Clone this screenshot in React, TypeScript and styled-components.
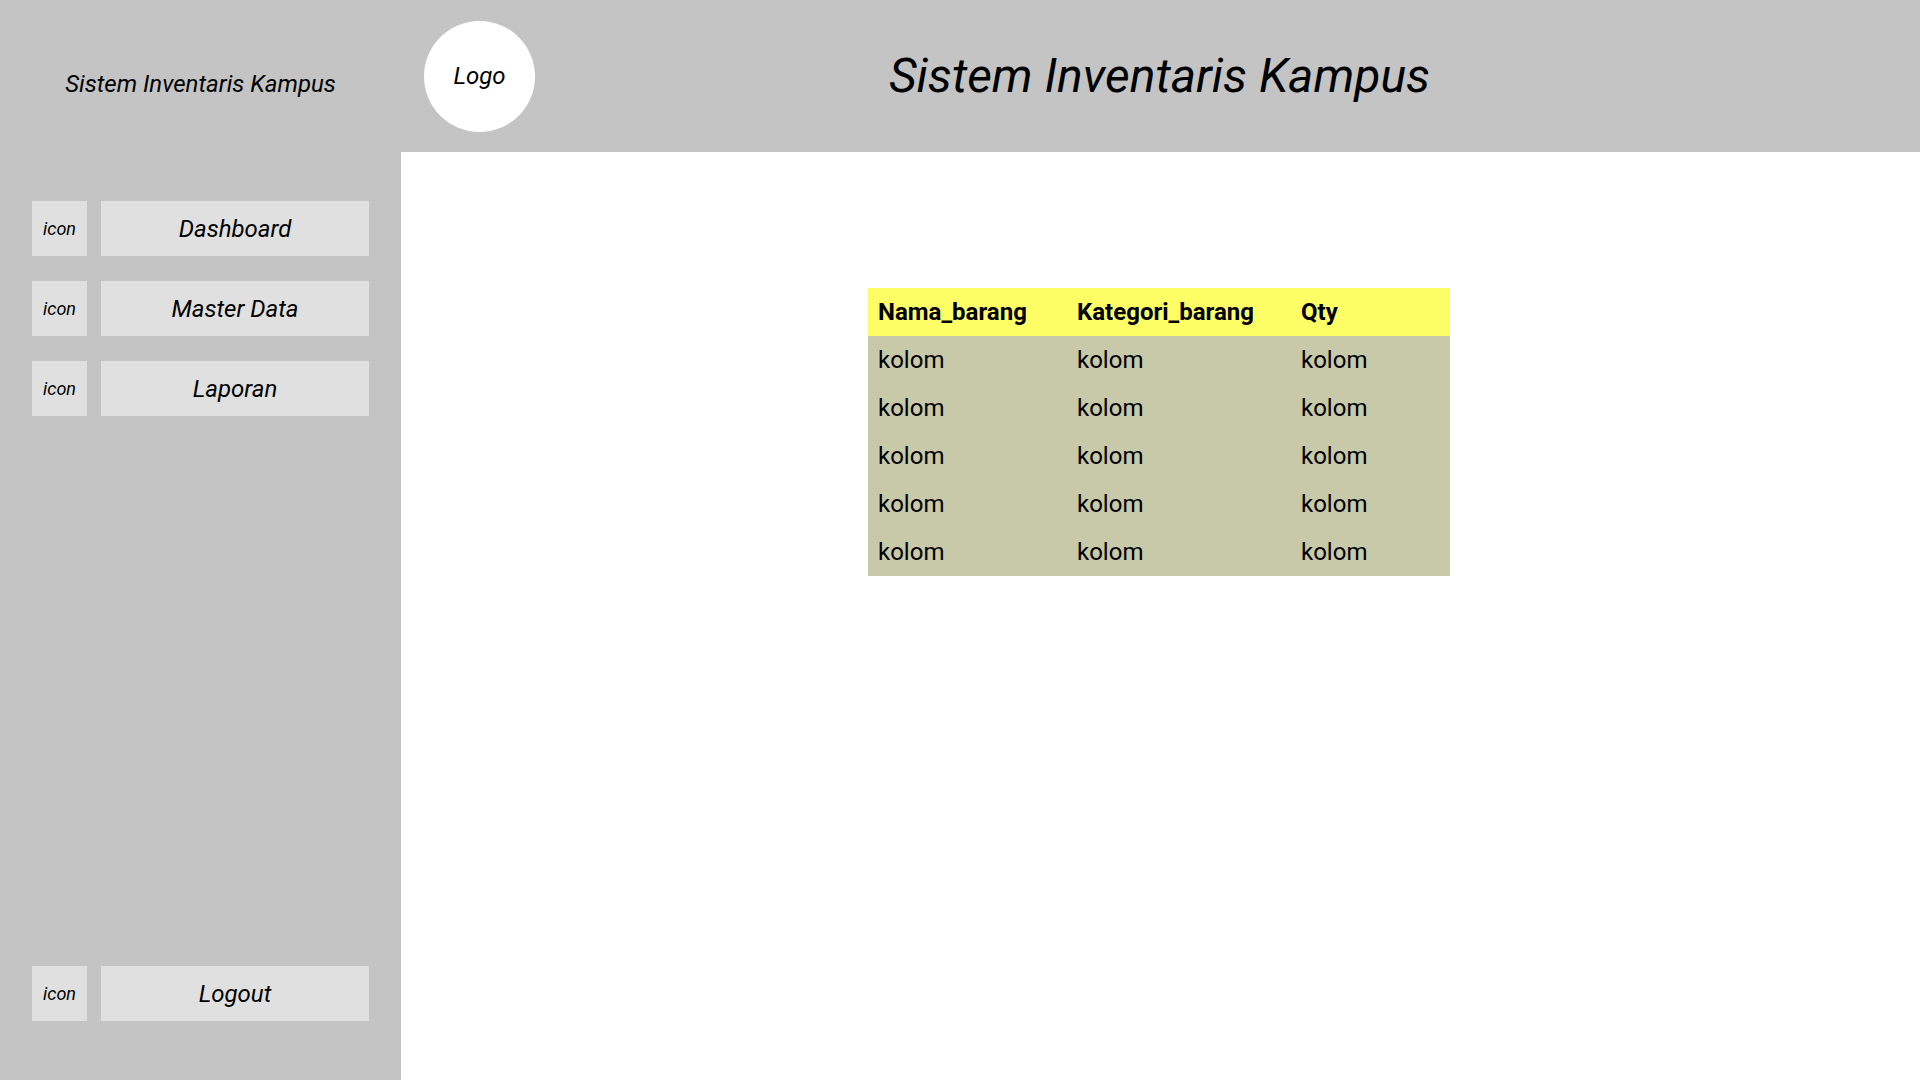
import React from "react";
import styled, { createGlobalStyle } from "styled-components";

const GlobalStyle = createGlobalStyle`
  html, body {
    margin: 0;
    padding: 0;
    height: 100%;
  }
  body {
    font-family: Roboto, "Liberation Sans", sans-serif;
    color: #000;
  }
  #root {
    height: 100vh;
  }
  * {
    box-sizing: border-box;
  }
`;

const Layout = styled.div`
  display: grid;
  grid-template-columns: 401px 1fr;
  height: 100vh;
  width: 100vw;
  overflow: hidden;
`;

const Sidebar = styled.aside`
  background: #c4c4c4;
  display: flex;
  flex-direction: column;
  padding: 70px 32px 59px 32px;
`;

const SideTitle = styled.div`
  font-style: italic;
  font-size: 24px;
  line-height: 28px;
  text-align: center;
  margin-bottom: 103px;
`;

const NavList = styled.nav`
  display: flex;
  flex-direction: column;
  gap: 25px;
`;

const NavRow = styled.div<{ $bottom?: boolean }>`
  display: flex;
  gap: 14px;
  height: 55px;
  margin-top: ${(p) => (p.$bottom ? "auto" : "0")};
`;

const IconBox = styled.div`
  width: 55px;
  height: 55px;
  background: #e0e0e0;
  display: flex;
  align-items: center;
  justify-content: center;
  font-style: italic;
  font-size: 18px;
`;

const NavButton = styled.div`
  flex: 1;
  height: 55px;
  background: #e0e0e0;
  display: flex;
  align-items: center;
  justify-content: center;
  font-style: italic;
  font-size: 24px;
`;

const Main = styled.main`
  display: flex;
  flex-direction: column;
  background: #ffffff;
`;

const Header = styled.header`
  height: 152px;
  background: #c4c4c4;
  display: grid;
  grid-template-columns: 1fr auto 1fr;
  align-items: center;
`;

const Logo = styled.div`
  justify-self: start;
  margin-left: 23px;
  width: 111px;
  height: 111px;
  border-radius: 50%;
  background: #ffffff;
  display: flex;
  align-items: center;
  justify-content: center;
  font-style: italic;
  font-size: 24px;
`;

const Title = styled.h1`
  margin: 0 2px 0 0;
  font-weight: 400;
  font-style: italic;
  font-size: 48px;
  line-height: 56px;
`;

const Content = styled.section`
  flex: 1;
  display: flex;
  justify-content: center;
  align-items: flex-start;
  padding: 136px 3px 0 0;
`;

const Table = styled.table`
  border-collapse: collapse;
  width: 582px;
  table-layout: fixed;
  font-size: 24px;
`;

const HeadCell = styled.th<{ $w: number }>`
  width: ${(p) => p.$w}px;
  height: 48px;
  padding: 0 10px;
  text-align: left;
  font-weight: 700;
  background: #fdfd66;
`;

const Cell = styled.td`
  height: 48px;
  padding: 0 10px;
  background: #c8c9a9;
`;

const columns = [
  { label: "Nama_barang", w: 199 },
  { label: "Kategori_barang", w: 224 },
  { label: "Qty", w: 159 },
];

const rows = Array.from({ length: 5 }, () => ["kolom", "kolom", "kolom"]);

const navItems = ["Dashboard", "Master Data", "Laporan"];

export default function App() {
  return (
    <>
      <GlobalStyle />
      <Layout>
        <Sidebar>
          <SideTitle>Sistem Inventaris Kampus</SideTitle>
          <NavList>
            {navItems.map((item) => (
              <NavRow key={item}>
                <IconBox>icon</IconBox>
                <NavButton>{item}</NavButton>
              </NavRow>
            ))}
          </NavList>
          <NavRow $bottom>
            <IconBox>icon</IconBox>
            <NavButton>Logout</NavButton>
          </NavRow>
        </Sidebar>
        <Main>
          <Header>
            <Logo>Logo</Logo>
            <Title>Sistem Inventaris Kampus</Title>
            <div />
          </Header>
          <Content>
            <Table>
              <thead>
                <tr>
                  {columns.map((c) => (
                    <HeadCell key={c.label} $w={c.w}>
                      {c.label}
                    </HeadCell>
                  ))}
                </tr>
              </thead>
              <tbody>
                {rows.map((r, i) => (
                  <tr key={i}>
                    {r.map((v, j) => (
                      <Cell key={j}>{v}</Cell>
                    ))}
                  </tr>
                ))}
              </tbody>
            </Table>
          </Content>
        </Main>
      </Layout>
    </>
  );
}
